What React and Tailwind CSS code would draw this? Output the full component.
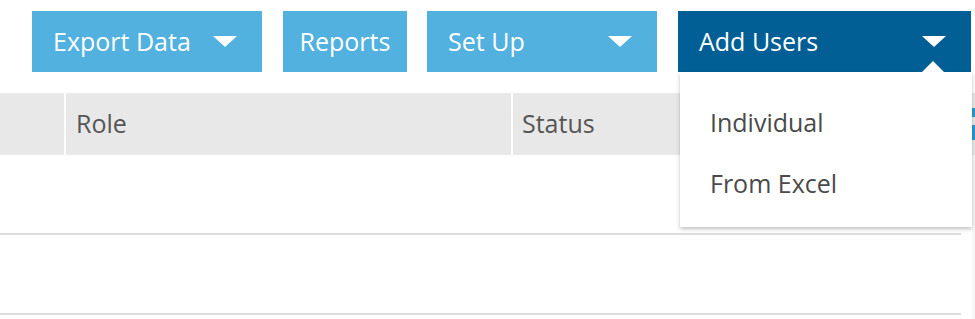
import React from "react";

const Caret = () => (
  <svg width="24" height="12" viewBox="0 0 24 12" className="block">
    <polygon points="0,0 24,0 12,11" fill="#ffffff" />
  </svg>
);

export default function App() {
  const font = { fontFamily: '"Open Sans", "Noto Sans", sans-serif' };
  return (
    <div className="relative w-[975px] h-[319px] bg-white overflow-hidden" style={font}>
      {/* toolbar */}
      <div className="flex h-[93px] pt-[11px] pl-[32px]">
        <button className="flex items-center justify-between w-[230px] h-[61px] bg-[#52b1de] text-white text-[25px] pl-[21px] pr-[25px]">
          <span>Export Data</span>
          <Caret />
        </button>
        <button className="ml-[21px] flex items-center justify-center w-[124px] h-[61px] bg-[#52b1de] text-white text-[25px]">
          <span>Reports</span>
        </button>
        <button className="ml-[20px] flex items-center justify-between w-[230px] h-[61px] bg-[#52b1de] text-white text-[25px] pl-[21px] pr-[25px]">
          <span>Set Up</span>
          <Caret />
        </button>
        <button className="relative ml-[21px] flex items-center justify-between w-[293px] h-[61px] bg-[#015f95] text-white text-[25px] pl-[21px] pr-[25px]">
          <span>Add Users</span>
          <Caret />
          <svg width="22" height="11" viewBox="0 0 22 11" className="absolute right-[27px] bottom-0 block">
            <polygon points="0,11 11,0 22,11" fill="#ffffff" />
          </svg>
        </button>
      </div>

      {/* table */}
      <div className="flex h-[62px] bg-[#e8e8e8] text-[#555555] text-[25px]">
        <div className="w-[66px] h-full border-r-2 border-white" />
        <div className="w-[447px] h-full border-r-2 border-white flex items-center pl-[10px]">Role</div>
        <div className="flex-1 h-full flex items-center pl-[9px]">Status</div>
      </div>
      <div className="w-[961px] h-[80px] border-b-2 border-[#dddddd]" />
      <div className="w-[961px] h-[80px] border-b-2 border-[#dddddd]" />

      {/* right edge fragments */}
      <div className="absolute left-[972px] top-[108px] w-[3px] h-[9px] bg-[#2a9bd4]" />
      <div className="absolute left-[972px] top-[125px] w-[3px] h-[15px] bg-[#2a9bd4]" />
      <div className="absolute left-[972px] top-[155px] w-[3px] h-[164px] bg-[#f7f7f7]" />

      {/* dropdown */}
      <div className="absolute left-[680px] top-[72px] w-[292px] h-[155px] bg-white shadow-[0_2px_4px_rgba(0,0,0,0.25)] text-[#4a4a4a] text-[25px]">
        <div className="h-[29px]" />
        <div className="pl-[30px] h-[44px] flex items-center">Individual</div>
        <div className="h-[17px]" />
        <div className="pl-[30px] h-[44px] flex items-center">From Excel</div>
      </div>
    </div>
  );
}
